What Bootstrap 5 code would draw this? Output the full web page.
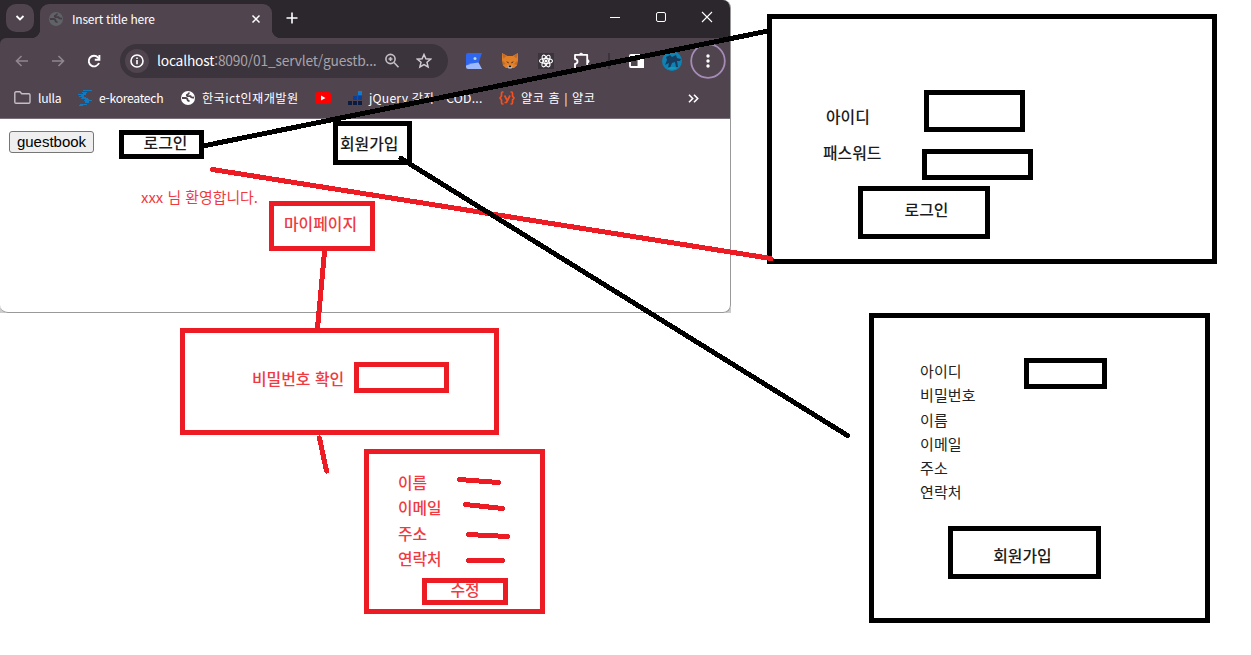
<!DOCTYPE html>
<html lang="ko">
<head>
<meta charset="utf-8">
<title>Guestbook flow sketch</title>
<link rel="stylesheet" href="https://cdn.jsdelivr.net/npm/bootstrap@5.3.0/dist/css/bootstrap.min.css">
<style>
body{margin:0;background:#fff;overflow:hidden;font-family:"Noto Sans CJK KR",sans-serif;color:#1c1c1c}
.board{width:1251px;height:655px;overflow:hidden}
.browser{width:731px;height:313px;border-right:1px solid #999;border-bottom:1px solid #999;border-radius:0 8px 8px 8px;overflow:hidden;background:#fff}
.corners{width:731px;height:313px;background:linear-gradient(#ccc,#ccc) 0 100%/5px 5px no-repeat,linear-gradient(#ccc,#ccc) 100% 100%/5px 5px no-repeat}
.tabstrip{height:38px;background:#2b272d}
.chev{width:28px;height:28px;margin:4px 6px 0;border-radius:10px;background:#50444f}
.tab-on{position:relative;width:232px;height:34px;margin-top:4px;padding:0 11px 4px 9px;border-radius:9px 9px 0 0;background:#50444f;color:#fff;font-size:12px;letter-spacing:-.22px}
.tab-on::before,.tab-on::after{content:"";position:absolute;bottom:0;width:9px;height:9px}
.tab-on::before{left:-9px;background:radial-gradient(circle at 0 0,#2b272d 9px,#50444f 9.5px)}
.tab-on::after{right:-9px;background:radial-gradient(circle at 100% 0,#2b272d 9px,#50444f 9.5px)}
.tab-name{margin:0 auto 0 9px}
.tab-plus{margin:12px 0 0 14px}
.winctl{gap:34px;padding:11px 17px 0 0}
.toolbar-wrap{background:#2b272d}
.toolbar{height:45px;background:#50444f;padding-left:4px;border-radius:6px 0 0 0}
.cell{width:36px;height:36px;flex:none}
.omni{width:328px;height:34px;margin:0 8px;border-radius:17px;background:#3b343c;color:#a9a3aa;font-size:13.8px}
.info{width:24px;height:24px;margin:0 8px 0 5px;border-radius:50%;background:#50444f}
.omni b{font-weight:400;color:#fff}
.omni-url{width:223px;letter-spacing:-.19px;white-space:nowrap}
.omni-star{margin-left:16px}
.marks{height:35px;background:#50444f;padding:0 31px 5px 14px;color:#fff;font-size:12.2px;white-space:nowrap}
.marks svg{margin-right:7px}
.ls-n{letter-spacing:-.28px}
.ls-p{letter-spacing:.4px}
.page-area{border-top:1px solid #77707a;padding:12px 9px}
.gb{width:85px;height:22px;border:1px solid #767676;border-radius:3px;background:#efefef;color:#000;font:15px/20px "Liberation Sans",sans-serif;padding:0}
.shape{border:5px solid #000;flex:none}
.red .shape,.shape.red{border-color:#ed1c24}
.red{color:#ef3a42}
.node{position:absolute}
.lbl{font-size:15.9px;font-weight:500;line-height:24px;white-space:nowrap}
.list-a{font-size:15px;line-height:24.25px;letter-spacing:.1px;color:#222;padding-top:1px}
.list-b{font-size:15.8px;line-height:25.3px;font-weight:500;padding-top:1px}
.wires{position:absolute;left:0;top:0;pointer-events:none}
</style>
</head>
<body>
<main class="board position-relative">
<div class="corners">
<section class="browser">
  <div class="tabstrip d-flex">
    <div class="chev d-flex align-items-center justify-content-center"><svg width="10" height="8" fill="none" stroke="#fff" stroke-width="1.800"><path d="M1.500 2 5 5.500 8.500 2"/></svg></div>
    <div class="tab-on d-flex align-items-center">
      <svg width="14" height="14"><circle cx="7" cy="7" r="7" fill="#5f6368"/><path d="M1 7h3.500q2 0 2 1.500 0 1.500 2 1.500M8 1.500Q8 3 6.500 3.500 5 4 6.500 5.200H9.500Q10 7 13 6.500" fill="none" stroke="#463c46" stroke-width="1.800"/></svg>
      <span class="tab-name">Insert title here</span>
      <svg width="10" height="10" stroke="#fff" stroke-width="1.500"><path d="M1.500 1.500l7 7m0-7-7 7"/></svg>
    </div>
    <svg class="tab-plus" width="12" height="12" stroke="#fff" stroke-width="1.600"><path d="M6 .5v11M.5 6h11"/></svg>
    <div class="winctl d-flex ms-auto">
      <svg width="12" height="12" stroke="#fff"><path d="M1 6.500h10"/></svg>
      <svg width="12" height="12" fill="none" stroke="#fff"><rect x="1.500" y="1.500" width="9" height="9" rx="1.500"/></svg>
      <svg width="12" height="12" stroke="#fff" stroke-width="1.100"><path d="M1 1l10 10M11 1 1 11"/></svg>
    </div>
  </div>
  <div class="toolbar-wrap"><div class="toolbar d-flex align-items-center">
    <div class="cell d-flex align-items-center justify-content-center"><svg width="14" height="12" fill="none" stroke="#8f8790" stroke-width="1.600"><path d="M13 6H1.500M6.500 1l-5 5 5 5"/></svg></div>
    <div class="cell d-flex align-items-center justify-content-center"><svg width="14" height="12" fill="none" stroke="#8f8790" stroke-width="1.600"><path d="M1 6h11.500M7.500 1l5 5-5 5"/></svg></div>
    <div class="cell d-flex align-items-center justify-content-center"><svg width="14" height="14" fill="none" stroke="#fff" stroke-width="1.900"><path d="M12 9A5.300 5.300 0 1 1 11 3.500L12 5"/><path d="M12.400 1v4.700H7.800"/></svg></div>
    <div class="omni d-flex align-items-center">
      <div class="info d-flex align-items-center justify-content-center"><svg width="14" height="14" fill="none" stroke="#fff" stroke-width="1.600"><circle cx="7" cy="7" r="6"/><path d="M7 6v4.300M7 3.500v1.600"/></svg></div>
      <span class="omni-url"><b>localhost</b>:8090/01_servlet/guestb...</span>
      <svg width="16" height="16" fill="none" stroke="#c4bec5" stroke-width="1.600" class="ms-1"><circle cx="6.500" cy="6" r="4.600"/><path d="M10 9.500l4.500 4.700M4.500 6h4M6.500 4v4"/></svg>
      <svg class="omni-star" width="16" height="16" fill="none" stroke="#d0cad1" stroke-width="1.500"><path d="M8 1.500l1.900 4.300 4.700.4-3.600 3.100 1.100 4.600L8 11.500l-4.100 2.400L5 9.300 1.400 6.200l4.700-.4z"/></svg>
    </div>
    <div class="cell d-flex align-items-center justify-content-center"><svg width="16" height="16"><path d="M2 0h14l-3 8.500-1 2.500-9 3-3-2V2q0-2 2-2z" fill="#2f66f0"/><path d="M0 12.500Q5 10 12.500 9.500L16 16H2q-2 0-2-2z" fill="#9db9fb"/><circle cx="9" cy="5.500" r="1.500" fill="#b5dcc0"/></svg></div>
    <div class="cell d-flex align-items-center justify-content-center"><svg width="16" height="16"><path d="M0 0l5.500 3h5L16 0v7l-1 5.500-3 2.500H4l-3-2.500L0 7z" fill="#e0812a"/><path d="M0 0l4.500 3-3 2.500zM16 0l-4.500 3 3 2.500zM1 8l3 3-3 1zM15 8l-3 3 3 1z" fill="#c46a24"/><path d="M4 8.500l2.500.5v1.500zM12 8.500l-2.500.5v1.500z" fill="#3c2b22"/><path d="M5.500 12.500h5L9.500 15.500h-3z" fill="#d9cfc8"/><path d="M6.700 12.500h2.600v1.800H6.700z" fill="#1f1a19"/></svg></div>
    <div class="cell d-flex align-items-center justify-content-center"><svg width="16" height="16" fill="none" stroke="#fff" stroke-width="1.100"><path d="M0 0h16v16H0z" fill="#3b343c" stroke="none"/><ellipse cx="8" cy="8" rx="6.500" ry="2.500"/><ellipse cx="8" cy="8" rx="6.500" ry="2.500" transform="rotate(60 8 8)"/><ellipse cx="8" cy="8" rx="6.500" ry="2.500" transform="rotate(120 8 8)"/><circle cx="8" cy="8" r="1" fill="#fff"/></svg></div>
    <div class="cell d-flex align-items-center justify-content-center"><svg width="18" height="18" fill="none" stroke="#fff" stroke-width="1.800"><path d="M2 2.900h12.200v12.900H2v-4q2.500-.2 2.500-2.400T2 7z" stroke-linejoin="round"/><path d="M6.300 2.500a1.900 1.900 0 0 1 3.600 0zM14.700 7.500a1.900 1.900 0 0 1 0 3.600z" fill="#fff" stroke-width="1"/></svg></div>
    <svg width="18" height="16"><path d="M8 0h2v16H8z" fill="#3b343c"/></svg>
    <div class="cell d-flex align-items-center justify-content-center"><svg width="15" height="14" fill="none" stroke="#fff" stroke-width="1.900"><rect x="1" y="1" width="13" height="12" rx="1"/><path d="M9.500 1H14v12H9.500z" fill="#fff"/></svg></div>
    <div class="cell d-flex align-items-center justify-content-center"><svg width="20" height="20"><circle cx="10" cy="10" r="10" fill="#0f82b4"/><path d="M4 6l4-2 2 2 4-2 1 3 4 1-1 2h-3l1 6h-2l-1-5-3 1-2 5H6l1-5-4 2 2-5z" fill="#183c60"/><path d="M5 17q5-2 10 0-5 3-10 0z" fill="#1698bd"/></svg></div>
    <div class="cell d-flex align-items-center justify-content-center"><svg width="36" height="36"><circle cx="18" cy="18" r="16.800" fill="none" stroke="#a58bb5" stroke-width="1.800"/><g fill="#fff"><circle cx="18" cy="13" r="1.700"/><circle cx="18" cy="18" r="1.700"/><circle cx="18" cy="23" r="1.700"/></g></svg></div>
  </div></div>
  <div class="marks d-flex align-items-center">
    <div class="d-flex align-items-center" style="width:64px"><svg width="17" height="13" fill="none" stroke="#c4bec5" stroke-width="1.400"><path d="M.8 2A1.200 1.200 0 0 1 2 .8h4l1.700 2H14.800A1.200 1.200 0 0 1 16 4v7a1.200 1.200 0 0 1-1.200 1.200H2A1.200 1.200 0 0 1 .8 11z"/></svg><span class="ls-n">lulla</span></div>
    <div class="d-flex align-items-center" style="width:103px"><svg width="14" height="16" stroke="#1478be" stroke-width="1"><path d="M5 .5h9M4 2.500h5M0 4.500h8M1 6.500h5M3 8.500h7M6 10.500h8M7 12.500h4M2 14.500h7M1 15.500h4M4 7.500h4M3 5.500h3M7 9.500h4M7 11.500h4M5 3.500h3"/></svg><span class="ls-n">e-koreatech</span></div>
    <div class="d-flex align-items-center" style="width:134px"><svg width="14" height="14"><circle cx="7" cy="7" r="7" fill="#fff"/><path d="M1 7h3.500q2 0 2 1.500 0 1.500 2 1.500M8 1.500Q8 3 6.500 3.500 5 4 6.500 5.200H9.500Q10 7 13 6.500" fill="none" stroke="#50444f" stroke-width="1.800"/></svg><span class="ls-p">한국ict인재개발원</span></div>
    <div class="d-flex align-items-center" style="width:33px"><svg width="16" height="12"><rect width="16" height="12" rx="3" fill="#f00"/><path d="M6 3.500v5L10.500 6z" fill="#fff"/></svg></div>
    <div class="d-flex align-items-center" style="width:151px"><svg width="14" height="14"><path d="M10 0h4v4h-4z" fill="#0e7bd0"/><path d="M5 5h4v4H5zM10 5h4v4h-4z" fill="#0b3f9c"/><path d="M0 10h4v4H0zM5 10h4v4H5zM10 10h4v4h-4z" fill="#0a1c42"/></svg><span style="letter-spacing:.2px">jQuery 강좌 - COD...</span></div>
    <div class="d-flex align-items-center"><svg class="me-2" style="margin-right:6px!important" width="16" height="14" fill="none" stroke="#f4511e" stroke-width="1.700"><path d="M4.500 1H3.500Q2.500 1 2.500 2.500V5L1 7l1.500 2v2.500Q2.500 13 3.500 13h1M11.500 1h1q1 0 1 1.500V5L15 7l-1.500 2v2.500q0 1.500-1 1.500h-1M5.500 4.500 8 9M11 4.500 7.500 11.500H5.500"/></svg><span style="letter-spacing:.55px">얄코 홈 | 얄코</span></div>
    <svg class="ms-auto me-0" width="11" height="9" fill="none" stroke="#fff" stroke-width="1.600"><path d="M1 .8l3.700 3.700L1 8.200M6 .8l3.700 3.700L6 8.200"/></svg>
  </div>
  <div class="page-area"><button class="gb d-block">guestbook</button></div>
</section>
</div>

<!-- sketched screens, placed freely on the board -->
<div class="node shape d-flex align-items-center justify-content-center" style="left:119px;top:130px;width:85px;height:29px"><span class="lbl ps-2 pb-1">로그인</span></div>
<div class="node shape d-flex align-items-center" style="left:333px;top:121px;width:79px;height:44px"><span class="lbl" style="margin:2px 0 0 2px">회원가입</span></div>
<div class="node red lbl fw-normal" style="left:141px;top:185px;font-size:14.9px">xxx 님 환영합니다.</div>
<div class="node shape red d-flex justify-content-center" style="left:269px;top:201px;width:106px;height:50px"><span class="lbl" style="margin:6px 3px 0 0">마이페이지</span></div>

<section class="node shape" style="left:767px;top:14px;width:450px;height:250px;padding-top:71px">
  <div class="d-flex" style="padding-left:54px"><span class="lbl" style="width:98px;padding-top:15px">아이디</span><div class="shape" style="width:101px;height:42px"></div></div>
  <div class="d-flex" style="padding:17px 0 0 51px;height:54px"><span class="lbl" style="width:99px;margin-top:-8px">패스워드</span><div class="shape" style="width:111px;height:31px"></div></div>
  <div class="shape d-flex justify-content-center" style="margin-left:86px;width:132px;height:53px"><span class="lbl" style="padding:7px 0 0 5px">로그인</span></div>
</section>

<section class="node shape" style="left:869px;top:313px;width:341px;height:310px;padding-top:40px">
  <div class="d-flex" style="padding-left:46px;height:146px"><div class="list-a" style="width:104px"><div>아이디</div><div>비밀번호</div><div>이름</div><div>이메일</div><div>주소</div><div>연락처</div></div><div class="shape" style="width:83px;height:31px"></div></div>
  <div class="shape d-flex justify-content-center" style="margin:22px 0 0 74px;width:153px;height:53px"><span class="lbl" style="padding-top:13px;margin-right:4px">회원가입</span></div>
</section>

<section class="node shape red d-flex align-items-start" style="left:180px;top:328px;width:319px;height:107px;padding:29px 0 0 67px">
  <span class="lbl" style="width:102px;padding-top:5px">비밀번호 확인</span><div class="shape" style="width:95px;height:31px"></div>
</section>

<section class="node shape red" style="left:364px;top:449px;width:181px;height:165px;padding-top:15px">
  <div class="list-b" style="padding-left:29px;height:102px"><div>이름</div><div>이메일</div><div>주소</div><div>연락처</div></div>
  <div class="shape d-flex justify-content-center" style="margin:7px 0 0 53px;width:86px;height:27px"><span class="lbl" style="margin-top:-5px">수정</span></div>
</section>

<svg class="wires" width="1251" height="655" fill="none" stroke-width="5" stroke-linecap="round" shape-rendering="crispEdges">
  <path stroke="#ed1c24" d="M212.500 169.500 771 258.500M324.500 252 317.500 328M319.500 438 326.500 471M459.500 479.500 498.500 482.500M465.500 504.500 502.500 508.500M468.500 534.500 507.500 536.500M468.500 560.500H502.500"/>
  <path stroke="#000" d="M203 146 768 31M401 158.500 847.500 435.500"/>
</svg>
</main>
<script src="https://cdn.jsdelivr.net/npm/bootstrap@5.3.0/dist/js/bootstrap.bundle.min.js"></script>
</body>
</html>
